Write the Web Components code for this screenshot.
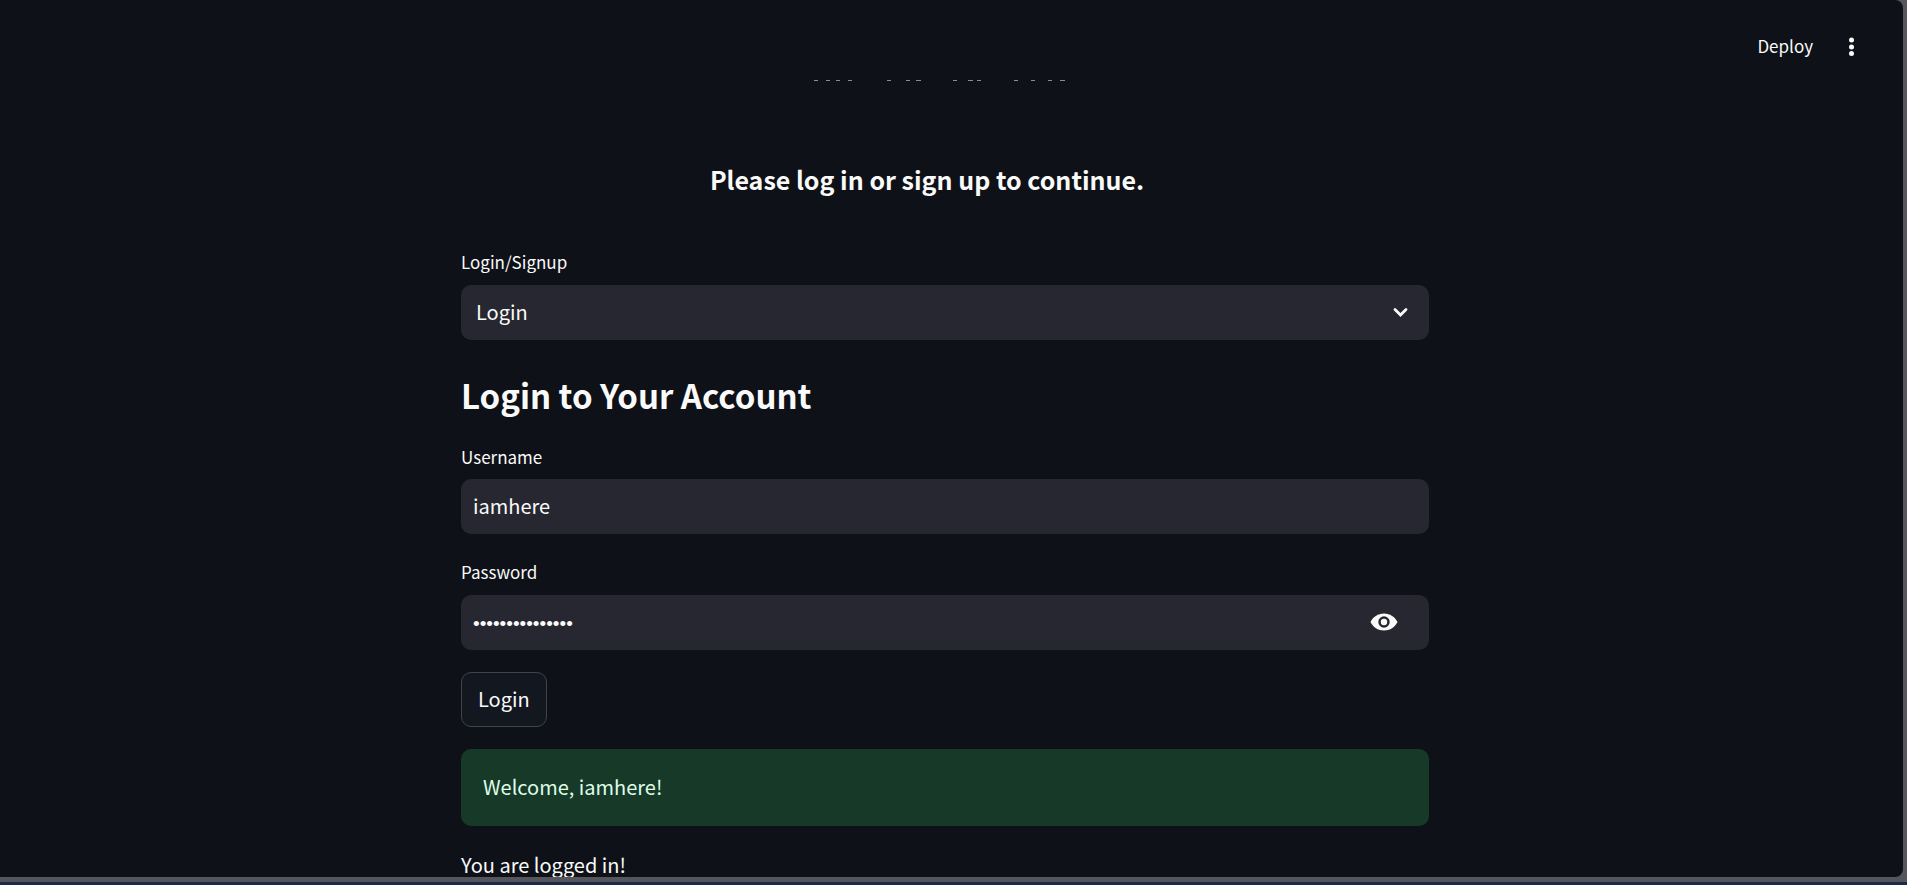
<!DOCTYPE html>
<html lang="en">
<head>
<meta charset="utf-8">
<meta name="viewport" content="width=device-width, initial-scale=1">
<title>Login</title>
<style>
  html { height: 100%; }
  body {
    margin: 0; height: 100%; overflow: hidden; background: #55565b;
    color: #fafafa; font-family: "Noto Sans CJK SC", "Noto Sans", sans-serif;
    font-size: 20px; line-height: 32px;
  }
</style>
</head>
<body>
<app-window>
  <app-toolbar slot="toolbar"></app-toolbar>
  <page-title>Please log in or sign up to continue.</page-title>
  <select-field label="Login/Signup" options="Login,Signup"></select-field>
  <section-heading>Login to Your Account</section-heading>
  <text-field label="Username" value="iamhere"></text-field>
  <password-field label="Password" value="correcthorse123"></password-field>
  <action-button>Login</action-button>
  <success-alert>Welcome, iamhere!</success-alert>
  <body-text>You are logged in!</body-text>
</app-window>
<script>
function define(name, render) {
  customElements.define(name, class extends HTMLElement {
    constructor() { super(); this.attachShadow({ mode: "open" }); }
    connectedCallback() {
      const t = document.createElement("template");
      t.innerHTML = render(this);
      this.shadowRoot.replaceChildren(t.content.cloneNode(true));
    }
  });
}

const fieldStyles = `
  :host { display: block; }
  label { display: block; font-size: 17px; line-height: 32px; margin-bottom: 7px; }
  .box { display: flex; align-items: center; height: 55px; border-radius: 10px; background: #262730; overflow: hidden; }
  input, select {
    flex: 1; min-width: 0; height: 100%; box-sizing: border-box; margin: 0; padding: 0 12px 2px;
    border: 0; outline: 0; background: transparent; color: inherit; font: inherit;
  }
  svg { display: block; fill: currentColor; }
`;

define("app-window", () => `
  <style>
    :host { display: flex; flex-direction: column; height: 100%; }
    .panel { flex: 1; min-height: 0; overflow: hidden; margin-right: 4px; background: #0e1117; border-radius: 0 8px 8px 0; }
    .clipped { display: block; margin: 0 auto; }
    .scroll { padding-right: 13px; }
    main { display: flex; flex-direction: column; gap: 22px; width: 968px; max-width: 90%; margin: 0 auto; }
    .edge { height: 5px; }
    .taskbar { height: 3px; background: #1a2c45; }
  </style>
  <div class="panel">
    <slot name="toolbar"></slot>
    <div class="scroll">
      <svg class="clipped" width="262" height="1" aria-hidden="true" fill="#8b8c8f">
        <path d="M0 0h4v1h-4zM12 0h4v1h-4zM22 0h4v1h-4zM34 0h4v1h-4zM73 0h4v1h-4zM92 0h4v1h-4zM102 0h5v1h-5zM139 0h4v1h-4zM154 0h5v1h-5zM163 0h4v1h-4zM200 0h4v1h-4zM217 0h4v1h-4zM234 0h4v1h-4zM246 0h5v1h-5z"/>
      </svg>
      <main><slot></slot></main>
    </div>
  </div>
  <div class="edge"></div>
  <div class="taskbar"></div>
`);

define("app-toolbar", () => `
  <style>
    :host { display: flex; justify-content: flex-end; align-items: center; height: 80px; gap: 26px; padding: 12px 40px 0 0; box-sizing: border-box; }
    button { border: 0; margin: 0; padding: 0; background: none; color: inherit; font: inherit; font-size: 17px; line-height: 24px; }
    svg { display: block; }
    .menu { width: 24px; height: 24px; }
  </style>
  <button type="button">Deploy</button>
  <button type="button" class="menu" aria-label="Main menu">
    <svg width="24" height="24" viewBox="0 0 24 24" fill="currentColor" aria-hidden="true"><circle cx="12.5" cy="6" r="2.5"/><circle cx="12.5" cy="13" r="2.5"/><circle cx="12.5" cy="19.500" r="2.5"/></svg>
  </button>
`);

define("page-title", () => `
  <style>
    :host { display: block; padding: 80px 36px 27px 0; }
    h5 { margin: 0; font-size: 25px; line-height: 36px; font-weight: 700; text-align: center; }
  </style>
  <h5><slot></slot></h5>
`);

define("section-heading", () => `
  <style>
    :host { display: block; padding-top: 9px; }
    h2 { margin: 0; font-size: 33px; line-height: 48px; font-weight: 600; }
  </style>
  <h2><slot></slot></h2>
`);

define("select-field", el => `
  <style>${fieldStyles}
    .box { position: relative; }
    select { appearance: none; padding: 0 56px 1px 15px; }
    option { background: #262730; }
    svg { position: absolute; right: 16px; }
  </style>
  <label for="control">${el.getAttribute("label")}</label>
  <div class="box">
    <select id="control">${el.getAttribute("options").split(",").map(o => `<option>${o}</option>`).join("")}</select>
    <svg width="25" height="25" viewBox="0 0 25 25" aria-hidden="true" pointer-events="none"><path d="M7 9.500l5.500 5.500 5.500-5.500" fill="none" stroke="currentColor" stroke-width="2.800" stroke-linecap="round"/></svg>
  </div>
`);

define("text-field", el => `
  <style>${fieldStyles}
    label { margin-bottom: 6px; }
  </style>
  <label for="control">${el.getAttribute("label")}</label>
  <div class="box"><input id="control" type="text" value="${el.getAttribute("value")}"></div>
`);

define("password-field", el => `
  <style>${fieldStyles}
    input { font-family: "Liberation Sans", sans-serif; font-size: 19px; padding: 3px 12px 0; }
    button { display: flex; align-items: center; border: 0; margin: 0; padding: 0 30px 2px; height: 100%; box-sizing: border-box; background: none; color: inherit; }
  </style>
  <label for="control">${el.getAttribute("label")}</label>
  <div class="box">
    <input id="control" type="password" value="${el.getAttribute("value")}">
    <button type="button" aria-label="Show password text">
      <svg width="30" height="30" viewBox="0 0 30 30" aria-hidden="true"><path fill-rule="evenodd" d="M15 6.500C9 6.500 4 10 1.500 15c2.500 5 7.500 8.500 13.500 8.500s11-3.500 13.500-8.500C26 10 21 6.500 15 6.500zM15 20.700a5.700 5.700 0 1 1 0-11.400 5.700 5.700 0 0 1 0 11.400zm0-8.900a3.200 3.200 0 1 0 0 6.400 3.200 3.200 0 0 0 0-6.400z"/></svg>
    </button>
  </div>
`);

define("action-button", () => `
  <style>
    :host { display: flex; }
    button { height: 55px; padding: 0 16px 1px; border: 1px solid #41444c; border-radius: 10px; background: #131720; color: inherit; font: inherit; }
  </style>
  <button type="button"><slot></slot></button>
`);

define("success-alert", () => `
  <style>
    :host { display: flex; align-items: center; height: 77px; box-sizing: border-box; padding: 0 22px 1px; border-radius: 10px; background: #173928; color: #dffde9; }
  </style>
  <div role="alert"><slot></slot></div>
`);

define("body-text", () => `
  <style>:host { display: block; } p { margin: 0; line-height: 34px; }</style>
  <p><slot></slot></p>
`);
</script>
</body>
</html>
